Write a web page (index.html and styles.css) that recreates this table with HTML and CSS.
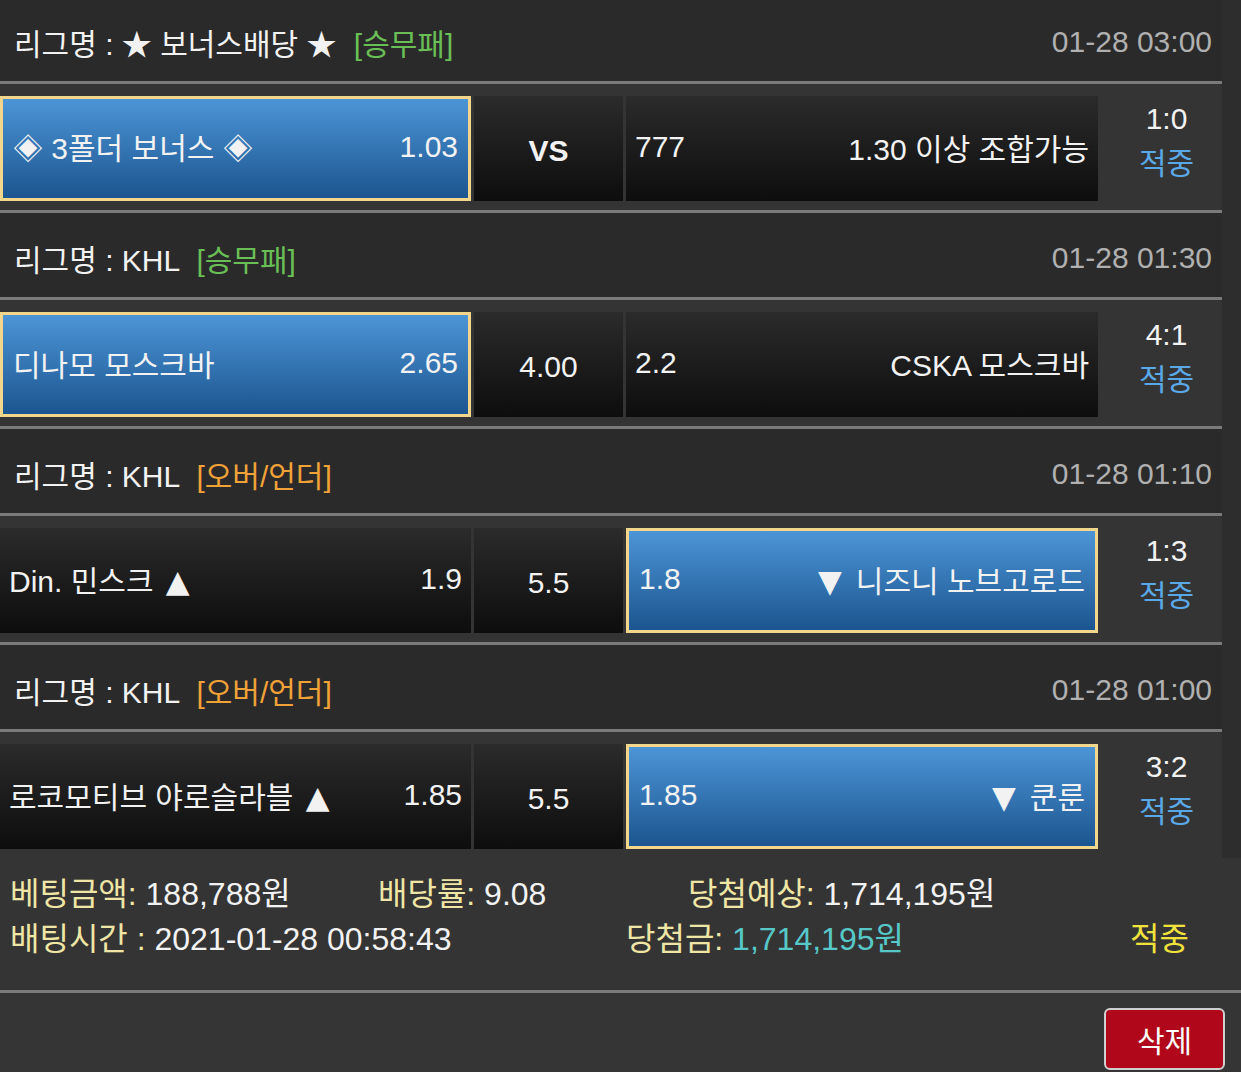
FILE: index.html
```html
<!DOCTYPE html>
<html lang="ko">
<head>
  <meta charset="UTF-8" />
  <meta name="viewport" content="width=device-width, initial-scale=1.0"/>
  <title>배팅내역</title>
  <link rel="stylesheet" href="styles.css">
</head>
<body>
  <div class="bet-list">
    <div class="league">
      <div class="league-name">리그명 : ★ 보너스배당 ★ <span class="type win">[승무패]</span></div>
      <div class="league-time">01-28 03:00</div>
    </div>
    <div class="match">
      <div class="pick selected"><span>◈ 3폴더 보너스 ◈</span><span>1.03</span></div>
      <div class="pick mid vs">VS</div>
      <div class="pick"><span>777</span><span>1.30 이상 조합가능</span></div>
      <div class="result"><div>1:0</div><div class="hit">적중</div></div>
    </div>

    <div class="league">
      <div class="league-name">리그명 : KHL <span class="type win">[승무패]</span></div>
      <div class="league-time">01-28 01:30</div>
    </div>
    <div class="match">
      <div class="pick selected"><span>디나모 모스크바</span><span>2.65</span></div>
      <div class="pick mid">4.00</div>
      <div class="pick"><span>2.2</span><span>CSKA 모스크바</span></div>
      <div class="result"><div>4:1</div><div class="hit">적중</div></div>
    </div>

    <div class="league">
      <div class="league-name">리그명 : KHL <span class="type ou">[오버/언더]</span></div>
      <div class="league-time">01-28 01:10</div>
    </div>
    <div class="match">
      <div class="pick"><span>Din. 민스크 <span class="arrow up">▲</span></span><span>1.9</span></div>
      <div class="pick mid">5.5</div>
      <div class="pick selected"><span>1.8</span><span><span class="arrow down">▼</span>니즈니 노브고로드</span></div>
      <div class="result"><div>1:3</div><div class="hit">적중</div></div>
    </div>

    <div class="league">
      <div class="league-name">리그명 : KHL <span class="type ou">[오버/언더]</span></div>
      <div class="league-time">01-28 01:00</div>
    </div>
    <div class="match last">
      <div class="pick"><span>로코모티브 야로슬라블 <span class="arrow up">▲</span></span><span>1.85</span></div>
      <div class="pick mid">5.5</div>
      <div class="pick selected"><span>1.85</span><span><span class="arrow down">▼</span>쿤룬</span></div>
      <div class="result"><div>3:2</div><div class="hit">적중</div></div>
    </div>
  </div>

  <div class="summary">
    <div class="summary-line">
      <div class="col-a"><span class="label">베팅금액:</span> 188,788원</div>
      <div class="col-b"><span class="label">배당률:</span> 9.08</div>
      <div><span class="label">당첨예상:</span> 1,714,195원</div>
    </div>
    <div class="summary-line">
      <div class="col-c"><span class="label">배팅시간 :</span> 2021-01-28 00:58:43</div>
      <div class="col-d"><span class="label">당첨금:</span> <span class="prize">1,714,195원</span></div>
      <div class="status">적중</div>
    </div>
  </div>

  <div class="actions">
    <button class="btn-delete">삭제</button>
  </div>
</body>
</html>
```

FILE: styles.css
```css
:root {
  --page: #2d2d2d;
  --header: #2a2a2a;
  --row: #343434;
  --line: #7a7a7a;
  --pale: #efe6a6;
  --font: "Liberation Sans", "Noto Sans CJK KR", sans-serif;
}

body {
  margin: 0;
  background: var(--page);
  color: #f2f2f2;
  font-family: var(--font);
  font-size: 30px;
  overflow: hidden;
}

.bet-list {
  width: 1222px;
  margin-top: -3px;
}

/* 오버/언더 화살표 */
.arrow {
  font-family: "DejaVu Sans", sans-serif;
  font-size: 31px;
}

.arrow.up {
  margin-left: 4px;
}

.arrow.down {
  margin-right: 14px;
}

.league {
  height: 78px;
  padding: 6px 10px 0 14px;
  border-bottom: 3px solid var(--line);
  background: var(--header);
  display: flex;
  justify-content: space-between;
  align-items: center;
}

.league-time {
  color: #b0b0b0;
}

.type {
  margin-left: 9px;
}

.type.win {
  color: #69bf55;
}

.type.ou {
  color: #f0a238;
}

.match {
  height: 105px;
  padding: 12px 0 9px;
  background: var(--row);
  border-bottom: 3px solid var(--line);
  display: grid;
  grid-template-columns: 471px 149px 472px 1fr;
  column-gap: 3px;
}

.match.last {
  border-bottom: none;
}

.pick {
  display: flex;
  justify-content: space-between;
  align-items: center;
  padding: 0 9px 3px;
  background: linear-gradient(#2b2b2b, #0d0d0d);
  white-space: nowrap;
}

.pick.selected {
  border: 3px solid #f3d68c;
  padding: 0 10px 3px;
  background: linear-gradient(#4c95d6, #1c5590);
}

.pick.mid {
  justify-content: center;
  padding: 4px 0 0;
}

.pick.vs {
  font-weight: bold;
}

.result {
  text-align: center;
  line-height: 45px;
  padding-left: 10px;
}

.hit {
  color: #5aa8e6;
}

.summary {
  background: var(--row);
  padding: 14px 10px 28px;
  font-size: 32px;
}

.summary-line {
  display: flex;
  line-height: 45px;
}

.label {
  color: var(--pale);
}

.col-a {
  width: 368px;
}

.col-b {
  width: 310px;
}

.col-c {
  width: 616px;
}

.col-d {
  width: 504px;
}

.prize {
  color: #57c8c8;
}

.status {
  color: #f0e23c;
}

.actions {
  border-top: 3px solid var(--line);
  background: #353535;
  display: flex;
  justify-content: flex-end;
  padding: 15px 16px 20px;
}

.btn-delete {
  width: 121px;
  height: 62px;
  background: #b0081a;
  color: #fff;
  border: 2px solid #cfcfcf;
  border-radius: 6px;
  font-family: var(--font);
  font-size: 30px;
  padding: 0;
}
```
